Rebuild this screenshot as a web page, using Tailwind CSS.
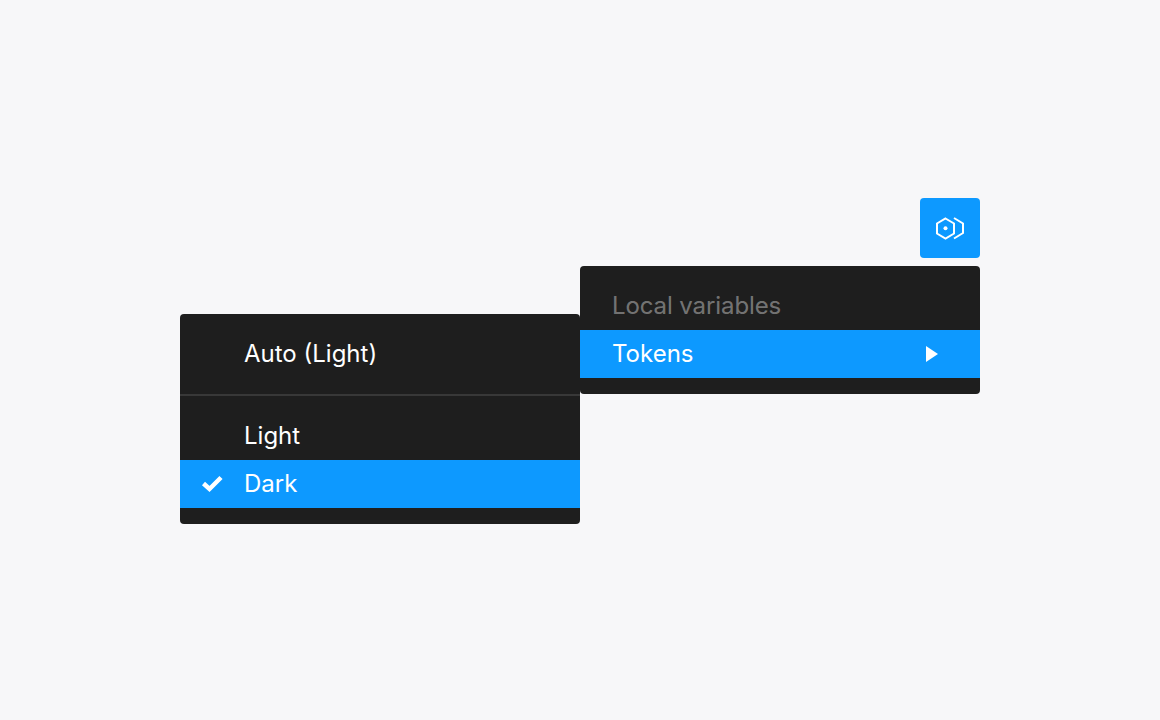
<!DOCTYPE html>
<html lang="en">
<head>
    <meta charset="UTF-8">
    <meta name="viewport" content="width=device-width, initial-scale=1.0">
    <title>Theme menus</title>
    <script src="https://cdn.jsdelivr.net/npm/@tailwindcss/browser@4"></script>
</head>
<body class="bg-[#f7f7f9] h-[720px] overflow-hidden font-['Inter',sans-serif] text-white text-[24px]">
    <div class="flex items-start pt-[198px] pl-[180px]">
        <!-- theme menu -->
        <div class="w-[400px] mt-[116px] py-4 bg-[#1e1e1e] rounded-[4px]">
            <div class="h-12 pl-16 flex items-center">Auto (Light)</div>
            <div class="h-[2px] my-4 bg-[#383838]"></div>
            <div class="h-12 pl-16 flex items-center">Light</div>
            <div class="h-12 flex items-center bg-[#0d99ff]">
                <div class="w-16 flex justify-center">
                    <svg width="24" height="24" viewBox="0 0 24 24" fill="none">
                        <path d="M3.500 11.500 9.500 17 21 5.500" stroke="#fff" stroke-width="4.500"/>
                    </svg>
                </div>
                <span>Dark</span>
            </div>
        </div>
        <!-- plugin button and variables menu -->
        <div class="w-[400px] flex flex-col items-end gap-2">
            <button class="w-[60px] h-[60px] flex items-center justify-center bg-[#0d99ff] rounded-[4px]">
                <svg width="32" height="32" viewBox="0 0 32 32" fill="none" stroke="#fff" stroke-width="2">
                    <path d="M11.500 6.500 20 11.500V21.500L11.500 26.500 3 21.500V11.500Z"/>
                    <path d="M20 6 29 11.500V21L20 26.500"/>
                    <circle cx="11.500" cy="16.300" r="2" fill="#fff" stroke="none"/>
                </svg>
            </button>
            <div class="w-full py-4 bg-[#1e1e1e] rounded-[4px]">
                <div class="h-12 pl-8 flex items-center text-white/40 tracking-[-0.1px]">Local variables</div>
                <div class="h-12 pl-8 pr-10 flex items-center justify-between bg-[#0d99ff]">
                    <span>Tokens</span>
                    <svg width="16" height="18" viewBox="0 0 16 18" fill="#fff">
                        <path d="M2 1V17L14 9Z"/>
                    </svg>
                </div>
            </div>
        </div>
    </div>
</body>
</html>
